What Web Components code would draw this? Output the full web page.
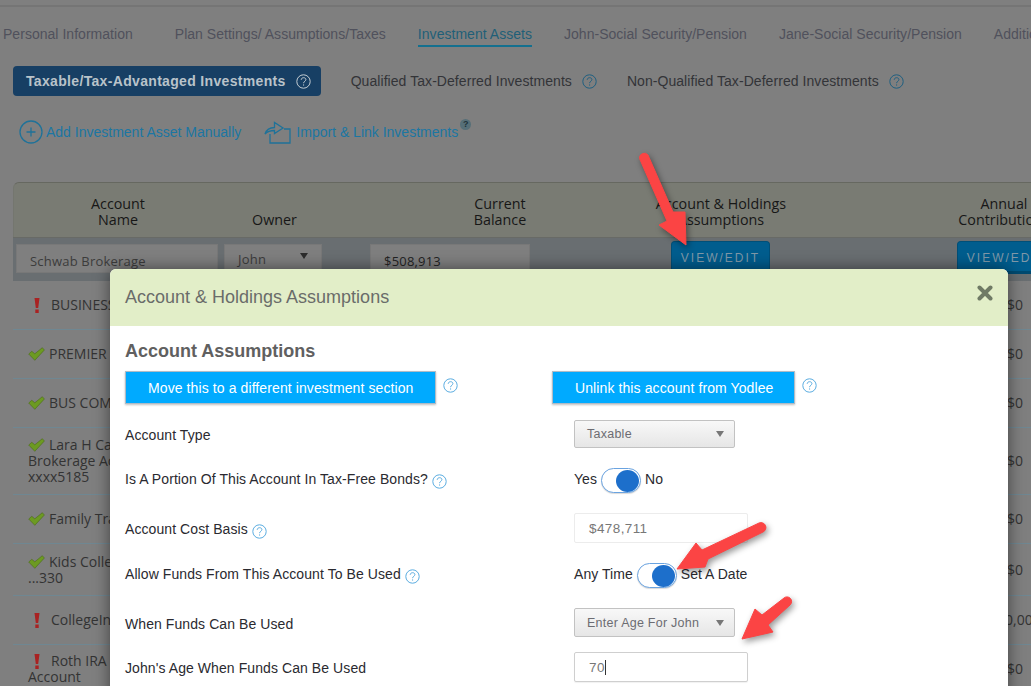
<!DOCTYPE html>
<html lang="en">
<head>
  <meta charset="UTF-8">
  <title>Account &amp; Holdings Assumptions</title>
  <style type="text/css">
    html, body {
      margin: 0;
      height: 686px;
      overflow: hidden;
      background: #7f7f7f;
      font-family: "Liberation Sans", Arial, sans-serif;
    }
  </style>
</head>
<body>
  <fp-page>
    <fp-tabs>
      <fp-tab style="margin-right:10px">Personal Information</fp-tab>
      <fp-tab>Plan Settings/ Assumptions/Taxes</fp-tab>
      <fp-tab active>Investment Assets</fp-tab>
      <fp-tab>John-Social Security/Pension</fp-tab>
      <fp-tab>Jane-Social Security/Pension</fp-tab>
      <fp-tab>Additional Income</fp-tab>
    </fp-tabs>

    <fp-subtabs>
      <fp-subtab active>Taxable/Tax-Advantaged Investments</fp-subtab>
      <fp-subtab>Qualified Tax-Deferred Investments</fp-subtab>
      <fp-subtab>Non-Qualified Tax-Deferred Investments</fp-subtab>
    </fp-subtabs>

    <fp-actions></fp-actions>

    <fp-table>
      <fp-account status="bad" style="--h:49px" value="$0">BUSINESS</fp-account>
      <fp-account status="ok" style="--h:49px" value="$0">PREMIER</fp-account>
      <fp-account status="ok" style="--h:49px" value="$0">BUS COMP</fp-account>
      <fp-account status="ok" style="--h:67px" value="$0">Lara H Cap<br>Brokerage Ac<br>xxxx5185</fp-account>
      <fp-account status="ok" style="--h:49px" value="$0">Family Trad</fp-account>
      <fp-account status="ok" style="--h:52px" value="$0">Kids Colleg<br>...330</fp-account>
      <fp-account status="bad" style="--h:49px" value="$10,000" shift="-18">CollegeIn</fp-account>
      <fp-account status="bad" style="--h:48px" value="$0">Roth IRA<br>Account</fp-account>
    </fp-table>
  </fp-page>

  <fp-modal heading="Account &amp; Holdings Assumptions">
    <fp-section heading="Account Assumptions">
      <fp-blue-button slot="left">Move this to a different investment section</fp-blue-button>
      <fp-blue-button slot="right">Unlink this account from Yodlee</fp-blue-button>
    </fp-section>
    <fp-field label="Account Type" style="--h:28px">
      <fp-select width="161">Taxable</fp-select>
    </fp-field>
    <fp-field label="Is A Portion Of This Account In Tax-Free Bonds?" help raised style="--h:25px">
      <fp-toggle left="Yes" right="No"></fp-toggle>
    </fp-field>
    <fp-field label="Account Cost Basis" help style="--h:30px">
      <fp-value>$478,711</fp-value>
    </fp-field>
    <fp-field label="Allow Funds From This Account To Be Used" help raised style="--h:25px">
      <fp-toggle left="Any Time" right="Set A Date"></fp-toggle>
    </fp-field>
    <fp-field label="When Funds Can Be Used" style="--h:29px">
      <fp-select width="161">Enter Age For John</fp-select>
    </fp-field>
    <fp-field label="John's Age When Funds Can Be Used" style="--h:30px;margin-top:-5px">
      <fp-value focused>70</fp-value>
    </fp-field>
  </fp-modal>

  <fp-arrows></fp-arrows>

  <script type="text/javascript">

    const HELP_COLORS = { light: "#5aace0", dark: "#1f5f80", pale: "#c4cdd3" }

    class ShadowElement extends HTMLElement {
      constructor() {
        super()
        this.attachShadow({ mode: "open" }).innerHTML = this.render()
      }
    }

    customElements.define("fp-help", class extends ShadowElement {
      render() {
        const color = HELP_COLORS[this.getAttribute("tone")] || HELP_COLORS.light
        return `
          <style>
            :host { display: inline-flex; flex: none; }
          </style>
          <svg width="15" height="15" viewBox="0 0 15 15" fill="none" stroke="${color}">
            <circle cx="7.5" cy="7.5" r="6.7"/>
            <path d="M5.2 5.8C5.3 4.4 6.3 3.7 7.6 3.7 9 3.7 9.9 4.5 9.9 5.6 9.9 7.2 7.6 7.3 7.6 9.2"/>
            <path d="M7.6 10.4V11.6"/>
          </svg>
        `
      }
    })

    customElements.define("fp-page", class extends ShadowElement {
      render() {
        return `
          <style>
            :host { display: block; width: 1031px; border-top: 2px solid #757575; margin-top: 5px; }
          </style>
          <slot></slot>
        `
      }
    })

    customElements.define("fp-tabs", class extends ShadowElement {
      render() {
        return `
          <style>
            :host {
              display: flex;
              gap: 32px;
              padding: 19px 0 0 3px;
              white-space: nowrap;
            }
          </style>
          <slot></slot>
        `
      }
    })

    customElements.define("fp-tab", class extends ShadowElement {
      render() {
        return `
          <style>
            :host {
              display: block;
              flex: none;
              height: 19px;
              font-size: 14px;
              line-height: 16px;
              letter-spacing: .03px;
              color: #50515c;
              border-bottom: 2px solid transparent;
            }
            :host([active]) {
              color: #1f5f78;
              border-bottom-color: #14708f;
            }
          </style>
          <slot></slot>
        `
      }
    })

    customElements.define("fp-subtabs", class extends ShadowElement {
      render() {
        return `
          <style>
            :host {
              display: flex;
              align-items: center;
              gap: 30px;
              height: 30px;
              margin: 19px 0 0 13px;
            }
          </style>
          <slot></slot>
        `
      }
    })

    customElements.define("fp-subtab", class extends ShadowElement {
      render() {
        const tone = this.hasAttribute("active") ? "pale" : "dark"
        return `
          <style>
            :host {
              display: flex;
              align-items: center;
              gap: 10px;
              flex: none;
              font-size: 14px;
              letter-spacing: .06px;
              color: #333438;
              white-space: nowrap;
            }
            :host([active]) {
              height: 30px;
              padding: 0 10px 0 13px;
              font-weight: bold;
              letter-spacing: .33px;
              color: #b9c3ca;
              background: #173f64;
              border-radius: 4px;
            }
          </style>
          <slot></slot><fp-help tone="${tone}"></fp-help>
        `
      }
    })

    customElements.define("fp-actions", class extends ShadowElement {
      render() {
        return `
          <style>
            :host {
              display: flex;
              align-items: center;
              height: 24px;
              margin: 24px 0 0 19px;
              font-size: 14px;
              color: #1b76a3;
              white-space: nowrap;
            }
            svg { flex: none; }
            .add { display: flex; align-items: center; gap: 3px; margin-right: 23px; }
            .import { display: flex; align-items: center; gap: 5px; }
            .badge {
              width: 11px;
              height: 11px;
              margin: -16px 0 0 2px;
              border-radius: 50%;
              background: #566f78;
              color: #20333b;
              font-size: 9px;
              font-weight: bold;
              line-height: 11px;
              text-align: center;
            }
          </style>
          <span class="add">
            <svg width="24" height="24" viewBox="0 0 24 24" fill="none" stroke="#1f7299" stroke-width="1.3">
              <circle cx="12" cy="12" r="11"/>
              <path d="M12 7.5V16.5M7.5 12H16.5"/>
            </svg>
            Add Investment Asset Manually
          </span>
          <span class="import">
            <svg width="27" height="24" viewBox="0 0 27 24" fill="none" stroke="#1f7299" stroke-width="1.3">
              <path d="M6 14V23H26V9H20"/>
              <path d="M1 14C2.500 9.500 6 7.500 10.500 7.500V2.500L19 8 10.500 13.500V10.500C6.500 10.500 3.500 11.500 1 14Z"/>
            </svg>
            Import &amp; Link Investments
          </span>
          <span class="badge">?</span>
        `
      }
    })

    customElements.define("fp-table", class extends ShadowElement {
      render() {
        return `
          <style>
            :host {
              display: block;
              width: 1186px;
              margin: 38px 0 0 13px;
              font-family: "Open Sans", "Noto Sans", sans-serif;
              font-size: 14.3px;
              color: #171717;
            }
            .head, .controls {
              display: grid;
              grid-template-columns: 208px 105px 307px 174px 392px;
            }
            .head {
              height: 55px;
              box-sizing: border-box;
              background: #797b73;
              border-top: 1px solid #666860;
              border-left: 1px solid #74766f;
              border-radius: 6px 0 0 0;
              line-height: 16px;
              align-items: end;
              text-align: center;
              padding-bottom: 9px;
            }
            .head div:nth-child(3) { padding-left: 39px; }
            .controls {
              height: 44px;
              box-sizing: border-box;
              background: #696e71;
              border-top: 1px solid #686a66;
              align-items: start;
            }
            .box {
              box-sizing: border-box;
              height: 29px;
              margin-top: 6px;
              padding: 0 13px;
              background: #7f7f7f;
              border: 1px solid #787878;
              font-size: 13px;
              line-height: 32px;
              color: #3c3c3c;
              letter-spacing: .2px;
            }
            .name { width: 202px; margin-left: 3px; }
            .owner { width: 98px; margin-left: 3px; display: flex; justify-content: space-between; align-items: center; }
            .owner i { border: 4px solid transparent; border-top: 6px solid #2c2c2c; border-bottom: 0; margin-top: -6px; }
            .balance { width: 160px; margin-left: 44px; color: #232323; }
            .view {
              box-sizing: border-box;
              height: 33px;
              margin-top: 3px;
              padding-top: 9px;
              background: #005d8e;
              border: 1px solid #004f78;
              border-bottom: 3px solid #004a70;
              border-radius: 4px;
              font-family: "Liberation Sans", Arial, sans-serif;
              font-size: 12px;
              letter-spacing: 2px;
              text-align: center;
              color: #7f98a8;
            }
            .view.first { width: 99px; margin-left: 38px; }
            .view.second { width: 99px; margin-left: 150px; }
          </style>
          <div class="head">
            <div>Account<br>Name</div>
            <div>Owner</div>
            <div>Current<br>Balance</div>
            <div>Account &amp; Holdings<br>Assumptions</div>
            <div>Annual<br>Contributions</div>
          </div>
          <div class="controls">
            <div class="box name">Schwab Brokerage</div>
            <div class="box owner">John<i></i></div>
            <div class="box balance">$508,913</div>
            <div class="view first">VIEW/EDIT</div>
            <div class="view second">VIEW/EDIT</div>
          </div>
          <slot></slot>
        `
      }
    })

    customElements.define("fp-account", class extends ShadowElement {
      render() {
        const ok = this.getAttribute("status") == "ok"
        const shift = this.getAttribute("shift") || 0
        const icon = ok
          ? `<svg class="check" width="17" height="14" viewBox="0 0 17 14">
               <path d="M.7 7 3.800 4.300 6.800 6.800 14.300.7 16.400 3 6.800 13.300Z" fill="#6c9a22" stroke="#4c6a1a" stroke-width=".6"/>
             </svg>`
          : `<svg class="bang" width="6" height="15" viewBox="0 0 6 15">
               <path d="M.5 0H5.500L4.200 10H1.800Z M1.300 11.500H4.700V15H1.300Z" fill="#a92222"/>
             </svg>`
        return `
          <style>
            :host {
              display: grid;
              grid-template-columns: 208px 1fr;
              align-items: center;
              box-sizing: border-box;
              height: var(--h);
              border-bottom: 1px solid #6f8792;
              font-size: 14px;
              line-height: 16px;
              color: #333;
            }
            .name { padding-left: 15px; }
            .check { vertical-align: -2px; margin-right: 4px; }
            .bang { vertical-align: -3px; margin: 0 11px 0 6px; }
            .value { padding-left: ${786 + Number(shift)}px; white-space: nowrap; }
          </style>
          <div class="name">${icon}<slot></slot></div>
          <div class="value">${this.getAttribute("value")}</div>
        `
      }
    })

    customElements.define("fp-modal", class extends ShadowElement {
      render() {
        return `
          <style>
            :host {
              display: block;
              position: absolute;
              left: 110px;
              top: 269px;
              width: 898px;
              height: 430px;
              background: #fff;
              border-radius: 6px 6px 0 0;
              box-shadow: 0 0 16px rgba(0, 0, 0, .5);
              font-family: "Liberation Sans", Arial, sans-serif;
            }
            header {
              display: flex;
              align-items: center;
              justify-content: space-between;
              height: 57px;
              padding: 0 15px;
              background: #e2eec8;
              border-radius: 6px 6px 0 0;
              font-size: 18px;
              color: #6a6c6a;
            }
            .close { width: 16px; height: 16px; margin: -10px 0 0 0; }
            main { display: flex; flex-direction: column; gap: 20px; padding: 0 15px; }
          </style>
          <header>
            <span>${this.getAttribute("heading")}</span>
            <svg class="close" viewBox="0 0 16 16" stroke="#6f7a65" stroke-width="4" stroke-linecap="round">
              <path d="M2.500 2.500 13.500 13.500M13.500 2.500 2.500 13.500"/>
            </svg>
          </header>
          <main><slot></slot></main>
        `
      }
    })

    customElements.define("fp-section", class extends ShadowElement {
      render() {
        return `
          <style>
            :host { display: block; margin-bottom: -4px; }
            h2 {
              margin: 0;
              padding-top: 15px;
              font-size: 18px;
              line-height: 21px;
              font-weight: bold;
              color: #606060;
            }
            .buttons { display: grid; grid-template-columns: 427px 1fr; margin-top: 9px; }
            .group { display: flex; gap: 7px; align-items: flex-start; }
            fp-help { margin-top: 7px; }
          </style>
          <h2>${this.getAttribute("heading")}</h2>
          <div class="buttons">
            <div class="group"><slot name="left"></slot><fp-help></fp-help></div>
            <div class="group"><slot name="right"></slot><fp-help></fp-help></div>
          </div>
        `
      }
    })

    customElements.define("fp-blue-button", class extends ShadowElement {
      render() {
        return `
          <style>
            :host {
              display: block;
              box-sizing: border-box;
              height: 33px;
              padding: 0 21px 0 22px;
              background: #00aaff;
              border: 1px solid #aebbc6;
              box-shadow: 0 1px 2px rgba(0, 0, 0, .25);
              font-size: 14px;
              line-height: 32px;
              letter-spacing: .1px;
              color: #fff;
              white-space: nowrap;
            }
          </style>
          <slot></slot>
        `
      }
    })

    customElements.define("fp-field", class extends ShadowElement {
      render() {
        const help = this.hasAttribute("help") ? "<fp-help></fp-help>" : ""
        return `
          <style>
            :host {
              display: grid;
              grid-template-columns: 449px 1fr;
              align-items: center;
              height: var(--h);
              font-size: 14px;
              letter-spacing: .08px;
              color: #2a2a30;
            }
            .label { display: flex; align-items: center; gap: 4px; padding-top: 2px; }
            :host([raised]) .label { padding: 0 0 3px; }
            fp-help { margin-top: 4px; }
          </style>
          <div class="label">${this.getAttribute("label")}${help}</div>
          <div><slot></slot></div>
        `
      }
    })

    customElements.define("fp-select", class extends ShadowElement {
      render() {
        return `
          <style>
            :host {
              display: flex;
              align-items: center;
              justify-content: space-between;
              box-sizing: border-box;
              width: ${this.getAttribute("width")}px;
              height: var(--h, 28px);
              padding: 0 10px 0 12px;
              background: linear-gradient(#f8f8f8, #e6e6e6);
              border: 1px solid #c2c2c2;
              border-radius: 2px;
              font-size: 12.500px;
              letter-spacing: .25px;
              color: #6c6c72;
              white-space: nowrap;
            }
            i { border: 4px solid transparent; border-top: 6px solid #777; border-bottom: 0; }
          </style>
          <span><slot></slot></span><i></i>
        `
      }
    })

    customElements.define("fp-toggle", class extends ShadowElement {
      render() {
        return `
          <style>
            :host {
              display: flex;
              align-items: center;
              gap: 4px;
              font-size: 14px;
              letter-spacing: .05px;
              color: #2a2a30;
              white-space: nowrap;
            }
            span.text { padding-bottom: 3px; }
            .track {
              display: flex;
              justify-content: flex-end;
              align-items: center;
              box-sizing: border-box;
              width: 40px;
              height: 25px;
              padding-right: 1px;
              background: #fff;
              border: 1.500px solid #6aa3e0;
              border-radius: 13px;
              box-shadow: 0 1px 1px rgba(0, 0, 0, .15);
            }
            .knob { width: 23px; height: 22px; border-radius: 50%; background: #1d6fcb; }
          </style>
          <span class="text">${this.getAttribute("left")}</span>
          <span class="track"><span class="knob"></span></span>
          <span class="text">${this.getAttribute("right")}</span>
        `
      }
    })

    customElements.define("fp-value", class extends ShadowElement {
      render() {
        const caret = this.hasAttribute("focused") ? '<i></i>' : ""
        return `
          <style>
            :host {
              display: flex;
              align-items: center;
              box-sizing: border-box;
              width: 174px;
              height: 30px;
              padding-left: 14px;
              background: #fff;
              border: 1px solid #ececec;
              border-radius: 2px;
              font-size: 13.500px;
              letter-spacing: .4px;
              color: #777;
            }
            :host([focused]) { border-color: #cfcfcf; box-shadow: 0 1px 1px rgba(0, 0, 0, .06); }
            i { width: 1px; height: 15px; background: #333; }
          </style>
          <slot></slot>${caret}
        `
      }
    })

    // annotation arrows drawn on top of the screenshot, so they sit on a free canvas
    customElements.define("fp-arrows", class extends ShadowElement {
      render() {
        return `
          <style>
            :host { display: block; position: absolute; left: 0; top: 0; width: 1031px; height: 686px; pointer-events: none; }
            svg { display: block; filter: drop-shadow(2px 3px 3px rgba(0, 0, 0, .4)); }
            path { fill: #fb4444; stroke: #fb4444; stroke-width: 1; stroke-linejoin: round; }
          </style>
          <svg width="1031" height="686" viewBox="0 0 1031 686">
            <path d="M639.500 158.500A4.800 4.800 0 0 1 648 155L673 212 685 212 686 245 659 225 667 221Z"/>
            <path d="M677 569 696 543 702 550 759 523A4.800 4.800 0 0 1 763 532L708 559 705 567Z"/>
            <path d="M742 639 755 609 762 615 784 598A4.500 4.500 0 0 1 790 605L768 625 773 632Z"/>
          </svg>
        `
      }
    })
  </script>
</body>
</html>
